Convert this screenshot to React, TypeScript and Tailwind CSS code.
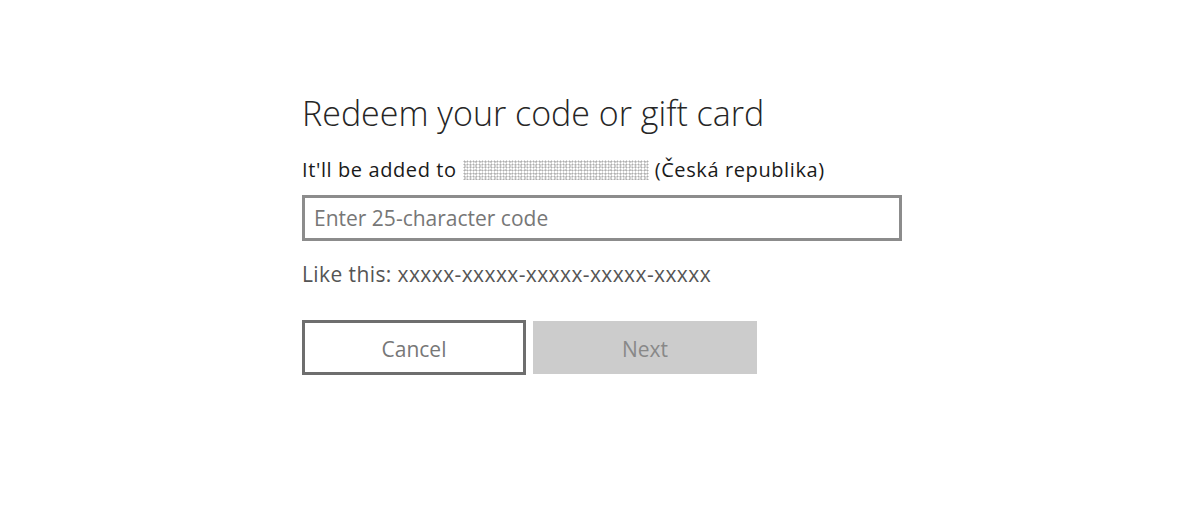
export default function App() {
  return (
    <div className="min-h-screen bg-white" style={{ fontFamily: '"Open Sans", "Noto Sans", sans-serif' }}>
      <div className="ml-[302px] w-[600px] pt-[91px]">
        <h1 className="text-[34px] leading-[44px] font-light text-[#262626]">Redeem your code or gift card</h1>
        <p className="mt-[23px] flex items-center text-[20px] leading-[24px] tracking-[0.6px] text-[#1a1a1a]">
          <span>It'll be added to</span>
          <span className="mx-[6px] inline-block h-[20px] w-[186px] bg-[radial-gradient(circle,#9a9a9a_0.7px,transparent_1.3px),radial-gradient(circle,#c4c4c4_0.8px,transparent_1.4px)] bg-[length:3px_3px,5px_4px] opacity-80" />
          <span>(Česká republika)</span>
        </p>
        <input
          type="text"
          placeholder="Enter 25-character code"
          className="mt-[13px] block h-[46px] w-full border-[3px] border-[#8c8c8c] px-[9px] text-[21px] text-[#333] placeholder:text-[#777] outline-none"
        />
        <p className="mt-[20px] text-[21px] leading-[26px] tracking-[0.4px] text-[#555]">Like this: xxxxx-xxxxx-xxxxx-xxxxx-xxxxx</p>
        <div className="mt-[33px] flex gap-[7px]">
          <button className="h-[55px] w-[224px] border-[3px] border-[#6e6e6e] bg-white pt-[4px] text-[21px] text-[#777]">Cancel</button>
          <button className="mt-[1px] h-[53px] w-[224px] bg-[#cccccc] pt-[4px] text-[21px] text-[#888]">Next</button>
        </div>
      </div>
    </div>
  );
}
